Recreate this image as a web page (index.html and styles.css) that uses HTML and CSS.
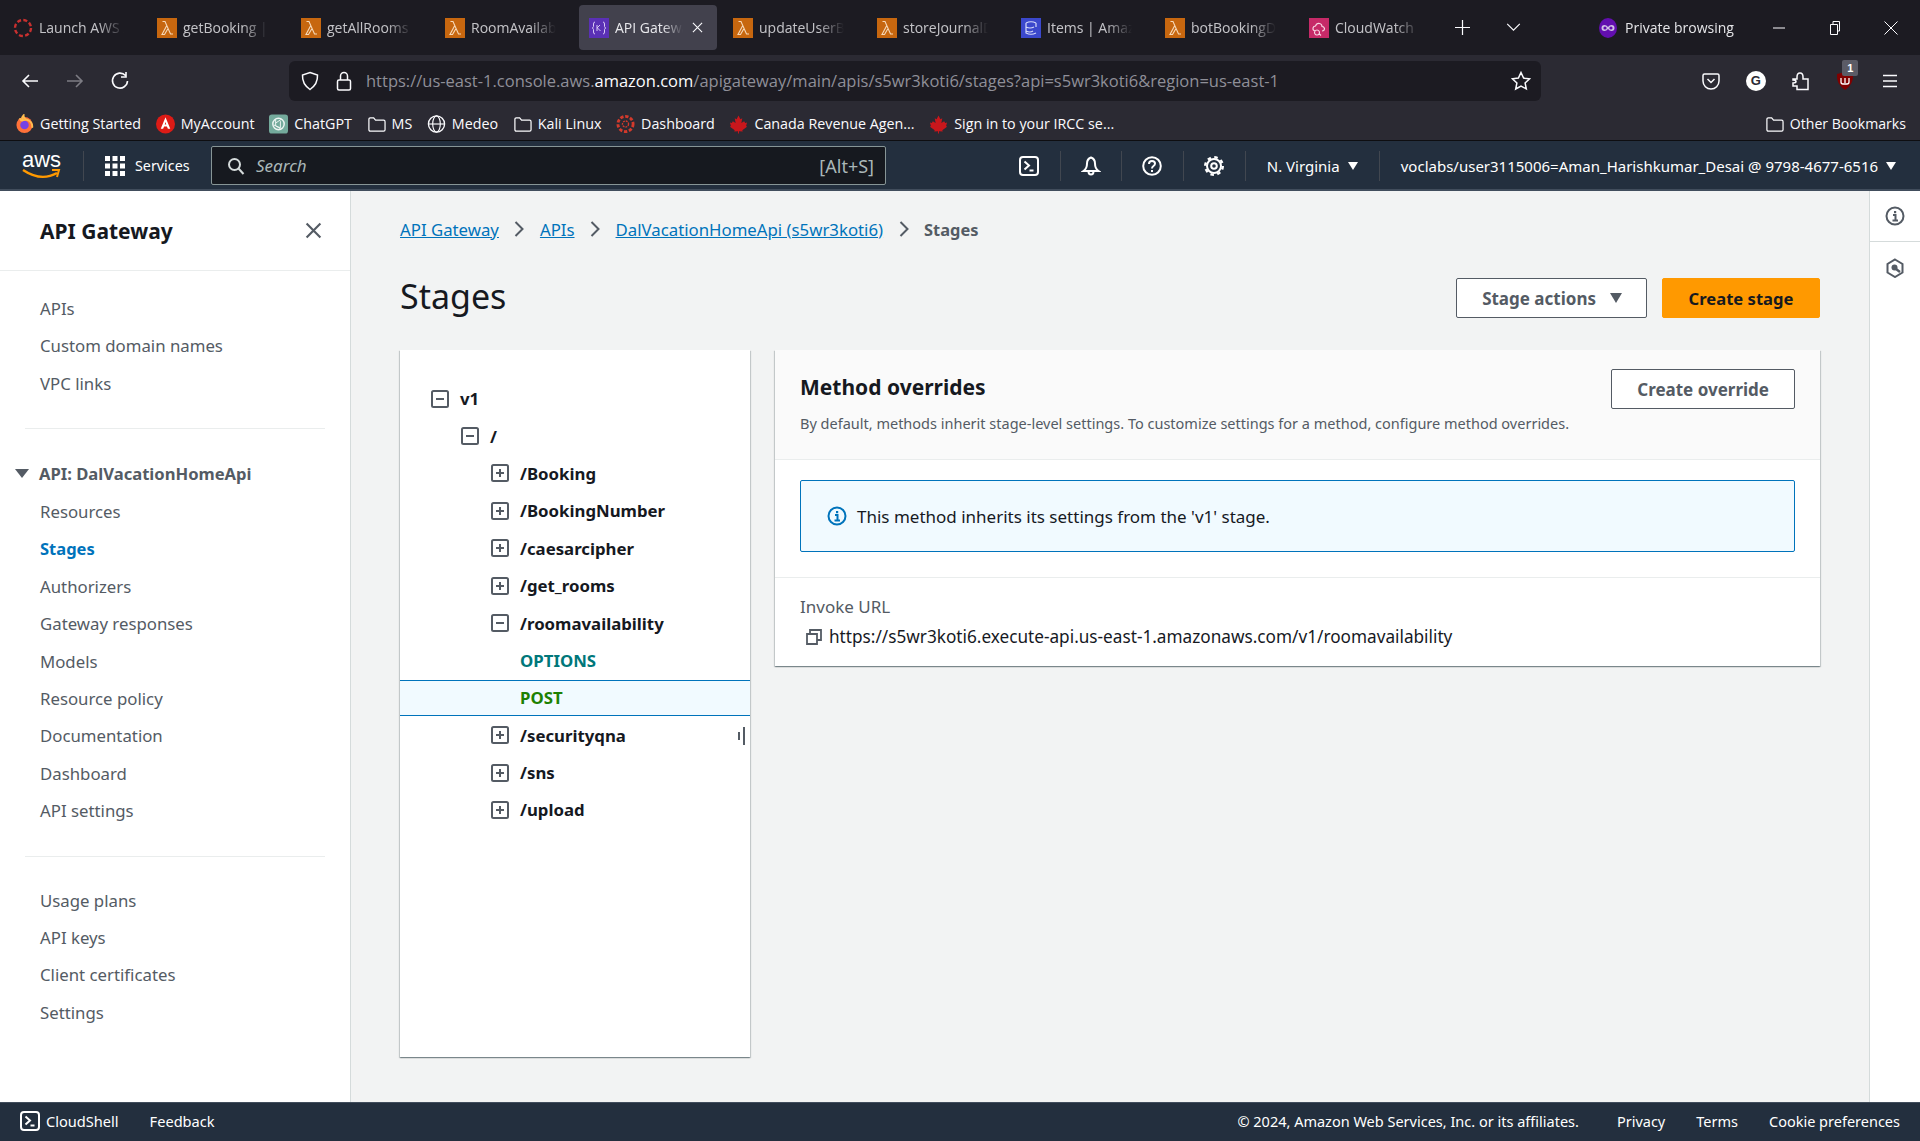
FILE: index.html
```html
<!DOCTYPE html>
<html lang="en">
<head>
<meta charset="utf-8">
<title>Stages - API Gateway</title>
<link rel="stylesheet" href="styles.css">
</head>
<body>
<svg class="defs" width="0" height="0">
  <symbol id="lambda" viewBox="0 0 20 20"><rect width="20" height="20" fill="#c7670f"/><path d="M5.500 3.500H8L13.500 16H16M9.500 8 5 16.500h2.500l3.200-5.500" fill="none" stroke="#f6d9b8" stroke-width="1.100"/></symbol>
  <symbol id="folder" viewBox="0 0 20 20"><path d="M2 16V5q0-1.500 1.500-1.500H7L9 6h8.500Q19 6 19 7.500V16q0 1.500-1.500 1.500h-14Q2 17.500 2 16Z" fill="none" stroke="#fbfbfe" stroke-width="1.300"/></symbol>
  <symbol id="leaf" viewBox="0 0 20 20"><path d="M10 1l2 4 2-1-1 5 3-2 1 2 2-.5-1 3.500 1 1-5 3.500.5 1.500-4-.5V20H9.500v-2.500l-4 .5.500-1.500L1 13l1-1-1-3.500 2 .5 1-2 3 2-1-5 2 1Z" fill="#c8171c"/></symbol>
  <symbol id="plus" viewBox="0 0 18 18"><rect x="1" y="1" width="16" height="16" rx="1.500" fill="none" stroke="#545b64" stroke-width="2"/><path d="M5 9h8M9 5v8" stroke="#545b64" stroke-width="2"/></symbol>
  <symbol id="minus" viewBox="0 0 18 18"><rect x="1" y="1" width="16" height="16" rx="1.500" fill="none" stroke="#545b64" stroke-width="2"/><path d="M5 9h8" stroke="#545b64" stroke-width="2"/></symbol>
  <symbol id="shell" viewBox="0 0 20 20"><rect x="1" y="1" width="18" height="18" rx="3" fill="none" stroke="#fff" stroke-width="2"/><path d="M5.500 5.500 10 9.500l-4.500 4M10.500 14.500h4" fill="none" stroke="#fff" stroke-width="2"/></symbol>
</svg>

<div class="tabbar">
  <div class="tab"><svg class="fav" viewBox="0 0 20 20"><circle cx="10" cy="10" r="8" fill="none" stroke="#c8302f" stroke-width="2.400" stroke-dasharray="4 2.300"/></svg><span class="tab-label">Launch AWS Academy</span></div>
  <div class="tab"><svg class="fav"><use href="#lambda"/></svg><span class="tab-label">getBooking | Lambda</span></div>
  <div class="tab"><svg class="fav"><use href="#lambda"/></svg><span class="tab-label">getAllRooms | Lambda</span></div>
  <div class="tab"><svg class="fav"><use href="#lambda"/></svg><span class="tab-label">RoomAvailability</span></div>
  <div class="tab tab-active"><svg class="fav" viewBox="0 0 20 20"><rect width="20" height="20" fill="#5a30b5"/><path d="M6 4Q4.500 4 4.500 6v2.500L3.500 10l1 1.500V14q0 2 1.500 2M14 4q1.500 0 1.500 2v2.500l1 1.500-1 1.500V14q0 2-1.500 2M8 7v6M8 10l3-3M8.500 10l3 3" fill="none" stroke="#d9c9f5" stroke-width="1"/></svg><span class="tab-label">API Gateway</span><svg class="tab-close" viewBox="0 0 12 12"><path d="M1 1l10 10M11 1 1 11" stroke="#fbfbfe" stroke-width="1.200"/></svg></div>
  <div class="tab"><svg class="fav"><use href="#lambda"/></svg><span class="tab-label">updateUserBooking</span></div>
  <div class="tab"><svg class="fav"><use href="#lambda"/></svg><span class="tab-label">storeJournalData</span></div>
  <div class="tab"><svg class="fav" viewBox="0 0 20 20"><rect width="20" height="20" fill="#3b48cc"/><path d="M5 5q5-2.500 10 0M5 5v10q5 2.500 10 0M5 9q4 2 8 0M5 13q4 2 7 0M15 5v4" fill="none" stroke="#d6dafa" stroke-width="1.200"/></svg><span class="tab-label">Items | Amazon DynamoDB</span></div>
  <div class="tab"><svg class="fav"><use href="#lambda"/></svg><span class="tab-label">botBookingData</span></div>
  <div class="tab"><svg class="fav" viewBox="0 0 20 20"><rect width="20" height="20" fill="#c62a68"/><path d="M6 13q-2.500-.5-2-3 .5-2 2.500-2 1-3 4-2.500 2.500.5 2.500 3 2 0 2.500 2 0 2.500-2.500 2.500M8 12a2.500 2.500 0 1 0 .01 0M10 15.500l2 2" fill="none" stroke="#f8d6e4" stroke-width="1.100"/></svg><span class="tab-label">CloudWatch | Logs</span></div>
  <svg class="tab-plus" viewBox="0 0 16 16"><path d="M8 0v16M0 8h16" stroke="#fbfbfe" stroke-width="1.300"/></svg>
  <svg class="tab-list" viewBox="0 0 16 10"><path d="M1 1l7 7 7-7" fill="none" stroke="#fbfbfe" stroke-width="1.300"/></svg>
  <div class="private">
    <svg viewBox="0 0 18 20" class="private-icon"><ellipse cx="9" cy="10" rx="9" ry="10" fill="#6a0dbf"/><path d="M2.500 10q0-3 3-3 2 0 3.500 2 1.500-2 3.500-2 3 0 3 3t-3 3q-2 0-3.500-2-1.500 2-3.500 2-3 0-3-3Z" fill="#e4d2fb"/><circle cx="6" cy="10" r="1.600" fill="#6a0dbf"/><circle cx="12" cy="10" r="1.600" fill="#6a0dbf"/></svg>
    <span>Private browsing</span>
  </div>
  <div class="winctl">
    <svg viewBox="0 0 14 14"><path d="M1 7h12" stroke="#fbfbfe"/></svg>
    <svg viewBox="0 0 14 14"><path d="M2.500 3.500h7v10h-7zM5 3.500V.5h6.500v9.500H9.500" fill="none" stroke="#fbfbfe"/></svg>
    <svg viewBox="0 0 14 14"><path d="M.5.500l13 13M13.500.5l-13 13" stroke="#fbfbfe"/></svg>
  </div>
</div>

<div class="toolbar">
  <div class="nav-btns">
    <svg viewBox="0 0 20 20"><path d="M18 10H3M9 4l-6 6 6 6" fill="none" stroke="#fbfbfe" stroke-width="1.600"/></svg>
    <svg viewBox="0 0 20 20"><path d="M2 10h15M11 4l6 6-6 6" fill="none" stroke="#7d7c84" stroke-width="1.600"/></svg>
    <svg viewBox="0 0 20 20"><path d="M15.500 4.500A7.500 7.500 0 1 0 17.500 10M16 1v5h-5" fill="none" stroke="#fbfbfe" stroke-width="1.600"/></svg>
  </div>
  <div class="urlbar">
    <svg class="url-icon" viewBox="0 0 20 20"><path d="M10 1.500 17.500 4q.5 9-7.500 14.500Q2 13 2.500 4Z" fill="none" stroke="#fbfbfe" stroke-width="1.500"/></svg>
    <svg class="url-icon" viewBox="0 0 20 20"><rect x="3.500" y="9" width="13" height="10" rx="1.500" fill="none" stroke="#fbfbfe" stroke-width="1.500"/><path d="M6.500 9V5a3.500 3.500 0 0 1 7 0v4" fill="none" stroke="#fbfbfe" stroke-width="1.500"/></svg>
    <span class="url-text">https://us-east-1.console.aws.<b>amazon.com</b>/apigateway/main/apis/s5wr3koti6/stages?api=s5wr3koti6&amp;region=us-east-1</span>
    <svg class="url-star" viewBox="0 0 20 20"><path d="M10 1.500l2.600 5.600 6 .7-4.500 4.100 1.200 6L10 15l-5.300 3 1.200-6L1.400 7.800l6-.7Z" fill="none" stroke="#fbfbfe" stroke-width="1.500"/></svg>
  </div>
  <div class="addons">
    <svg viewBox="0 0 20 20"><path d="M2 4.500Q2 3 3.500 3h13Q18 3 18 4.500V10a8 8 0 0 1-16 0Z" fill="none" stroke="#fbfbfe" stroke-width="1.500"/><path d="M6.500 8l3.500 3.500L13.500 8" fill="none" stroke="#fbfbfe" stroke-width="1.500"/></svg>
    <div class="grammarly">G</div>
    <svg viewBox="0 0 20 20"><path d="M2 8h4V6q0-4 3-4t3 4v2h5v10.500H6v-3.500H2v-3q3 0 3-1.500T2 9Z" fill="none" stroke="#fbfbfe" stroke-width="1.500"/></svg>
    <div class="ublock"><svg viewBox="0 0 20 20"><path d="M10 1 18 3q1 10-8 16Q1 13 2 3Z" fill="#800000"/><path d="M6 7v4q0 2 2 2h4q2 0 2-2V7M10 7v5" fill="none" stroke="#fff" stroke-width="1.300"/></svg><span class="ublock-count">1</span></div>
    <svg viewBox="0 0 20 20"><path d="M3 4.500h14M3 10h14M3 15.500h14" stroke="#fbfbfe" stroke-width="1.600"/></svg>
  </div>
</div>

<div class="bookmarks">
  <a class="bm"><svg class="bm-icon" viewBox="0 0 20 20"><circle cx="10" cy="11" r="8.500" fill="#ff7139"/><circle cx="10" cy="11" r="4.500" fill="#7542e5"/><path d="M5 4q1 3 4 2-3-2 0-5 0 4 5 5 5 3 4 8" fill="none" stroke="#ffbd4f" stroke-width="2"/></svg>Getting Started</a>
  <a class="bm"><svg class="bm-icon" viewBox="0 0 20 20"><circle cx="10" cy="10" r="10" fill="#dd1b16"/><path d="M10 3 5 15h2.500l1-2.500h3l1 2.500H15ZM9.200 10.500 10 8l.8 2.500Z" fill="#fff"/></svg>MyAccount</a>
  <a class="bm"><svg class="bm-icon" viewBox="0 0 20 20"><rect width="20" height="20" rx="3" fill="#74aa9c"/><circle cx="10" cy="10" r="6" fill="none" stroke="#eef5f3" stroke-width="1.500"/><path d="M7 5v7l5 3M13 5 7 9M5 11l7 3V7" fill="none" stroke="#eef5f3"/></svg>ChatGPT</a>
  <a class="bm"><svg class="bm-icon"><use href="#folder"/></svg>MS</a>
  <a class="bm"><svg class="bm-icon" viewBox="0 0 20 20"><circle cx="10" cy="10" r="8.500" fill="none" stroke="#fbfbfe" stroke-width="1.400"/><ellipse cx="10" cy="10" rx="4" ry="8.500" fill="none" stroke="#fbfbfe" stroke-width="1.200"/><path d="M1.500 10h17" stroke="#fbfbfe" stroke-width="1.200"/></svg>Medeo</a>
  <a class="bm"><svg class="bm-icon"><use href="#folder"/></svg>Kali Linux</a>
  <a class="bm"><svg class="bm-icon" viewBox="0 0 20 20"><circle cx="10" cy="10" r="8" fill="none" stroke="#d33a2c" stroke-width="3" stroke-dasharray="3.500 1.800"/><circle cx="10" cy="10" r="3.200" fill="none" stroke="#d33a2c" stroke-width="1.400" stroke-dasharray="2 1"/></svg>Dashboard</a>
  <a class="bm"><svg class="bm-icon"><use href="#leaf"/></svg>Canada Revenue Agen...</a>
  <a class="bm"><svg class="bm-icon"><use href="#leaf"/></svg>Sign in to your IRCC se...</a>
  <a class="bm bm-other"><svg class="bm-icon"><use href="#folder"/></svg>Other Bookmarks</a>
</div>

<header class="awsbar">
  <div class="aws-logo">
    <span class="aws-word">aws</span>
    <svg viewBox="0 0 40 12"><path d="M1 2q18 12 34 3" fill="none" stroke="#ff9900" stroke-width="2.400"/><path d="M30 2h7l-2 7" fill="none" stroke="#ff9900" stroke-width="2"/></svg>
  </div>
  <div class="services">
    <svg viewBox="0 0 20 20" class="grid-icon"><path d="M0 0h5v5H0zM7.500 0h5v5h-5zM15 0h5v5h-5zM0 7.500h5v5H0zM7.500 7.500h5v5h-5zM15 7.500h5v5h-5zM0 15h5v5H0zM7.500 15h5v5h-5zM15 15h5v5h-5z" fill="#fff"/></svg>
    Services
  </div>
  <div class="aws-search">
    <svg viewBox="0 0 18 18"><circle cx="7.500" cy="7.500" r="5.500" fill="none" stroke="#d5dbdb" stroke-width="2"/><path d="M11.500 11.500l5 5.500" stroke="#d5dbdb" stroke-width="2"/></svg>
    <em>Search</em>
    <span>[Alt+S]</span>
  </div>
  <div class="aws-tools">
    <div class="aws-tool"><svg viewBox="0 0 20 20"><use href="#shell"/></svg></div>
    <div class="aws-tool"><svg viewBox="0 0 20 20"><path d="M10 1.500q-4 1.500-4 6 0 5-3.500 7.500h15Q14 12.500 14 7.500q0-4.500-4-6ZM7.500 15.500q0 3 2.500 3t2.500-3" fill="none" stroke="#fff" stroke-width="2"/></svg></div>
    <div class="aws-tool"><svg viewBox="0 0 20 20"><circle cx="10" cy="10" r="8.800" fill="none" stroke="#fff" stroke-width="2"/><path d="M7 8q0-3 3-3t3 2.500q0 1.500-1.500 2.500T10 12.500" fill="none" stroke="#fff" stroke-width="2"/><path d="M9 14h2v2H9z" fill="#fff"/></svg></div>
    <div class="aws-tool"><svg viewBox="0 0 20 20"><circle cx="10" cy="10" r="2.800" fill="none" stroke="#fff" stroke-width="2"/><circle cx="10" cy="10" r="7" fill="none" stroke="#fff" stroke-width="2"/><circle cx="10" cy="10" r="8.800" fill="none" stroke="#fff" stroke-width="2.400" stroke-dasharray="3.500 3.410"/></svg></div>
    <div class="aws-menu region">N. Virginia <i class="caret"></i></div>
    <div class="aws-menu account">voclabs/user3115006=Aman_Harishkumar_Desai @ 9798-4677-6516 <i class="caret"></i></div>
  </div>
</header>

<div class="console">
  <nav class="sidenav">
    <div class="sidenav-head">
      <h2>API Gateway</h2>
      <svg viewBox="0 0 16 16"><path d="M1.500 1.500l13 13M14.500 1.500l-13 13" stroke="#545b64" stroke-width="2"/></svg>
    </div>
    <ul class="navlist">
      <li>APIs</li>
      <li>Custom domain names</li>
      <li>VPC links</li>
    </ul>
    <hr class="navrule">
    <div class="nav-section"><i class="caret caret-grey"></i>API: DalVacationHomeApi</div>
    <ul class="navlist navlist-sub">
      <li>Resources</li>
      <li class="current">Stages</li>
      <li>Authorizers</li>
      <li>Gateway responses</li>
      <li>Models</li>
      <li>Resource policy</li>
      <li>Documentation</li>
      <li>Dashboard</li>
      <li>API settings</li>
    </ul>
    <hr class="navrule">
    <ul class="navlist">
      <li>Usage plans</li>
      <li>API keys</li>
      <li>Client certificates</li>
      <li>Settings</li>
    </ul>
  </nav>

  <main class="content">
    <div class="crumbs">
      <a>API Gateway</a><svg viewBox="0 0 10 16"><path d="M1.500 1l7 7-7 7" fill="none" stroke="#545b64" stroke-width="2"/></svg>
      <a>APIs</a><svg viewBox="0 0 10 16"><path d="M1.500 1l7 7-7 7" fill="none" stroke="#545b64" stroke-width="2"/></svg>
      <a>DalVacationHomeApi (s5wr3koti6)</a><svg viewBox="0 0 10 16"><path d="M1.500 1l7 7-7 7" fill="none" stroke="#545b64" stroke-width="2"/></svg>
      <span>Stages</span>
    </div>
    <div class="page-head">
      <h1>Stages</h1>
      <div class="page-actions">
        <button class="btn btn-actions">Stage actions <i class="caret caret-dark"></i></button>
        <button class="btn btn-primary">Create stage</button>
      </div>
    </div>
    <div class="columns">
      <section class="tree">
        <div class="node d0"><svg><use href="#minus"/></svg>v1</div>
        <div class="node d1"><svg><use href="#minus"/></svg>/</div>
        <div class="node d2"><svg><use href="#plus"/></svg>/Booking</div>
        <div class="node d2"><svg><use href="#plus"/></svg>/BookingNumber</div>
        <div class="node d2"><svg><use href="#plus"/></svg>/caesarcipher</div>
        <div class="node d2"><svg><use href="#plus"/></svg>/get_rooms</div>
        <div class="node d2"><svg><use href="#minus"/></svg>/roomavailability</div>
        <div class="node method method-options">OPTIONS</div>
        <div class="node method method-post">POST</div>
        <div class="node d2"><svg><use href="#plus"/></svg>/securityqna<i class="drag-cursor"></i></div>
        <div class="node d2"><svg><use href="#plus"/></svg>/sns</div>
        <div class="node d2"><svg><use href="#plus"/></svg>/upload</div>
      </section>
      <section class="detail">
        <div class="detail-head">
          <div>
            <h3>Method overrides</h3>
            <p>By default, methods inherit stage-level settings. To customize settings for a method, configure method overrides.</p>
          </div>
          <button class="btn btn-override">Create override</button>
        </div>
        <div class="detail-alert">
          <div class="alert">
            <svg viewBox="0 0 20 20"><circle cx="10" cy="10" r="8.500" fill="none" stroke="#0073bb" stroke-width="2"/><path d="M8 9h2.500v5M7.500 14.500h5.500" fill="none" stroke="#0073bb" stroke-width="2"/><path d="M9 5h2.200v2.200H9z" fill="#0073bb"/></svg>
            This method inherits its settings from the 'v1' stage.
          </div>
        </div>
        <div class="invoke">
          <div class="invoke-label">Invoke URL</div>
          <div class="invoke-url">
            <svg viewBox="0 0 16 16"><path d="M1 5h10v10H1zM4 5V1h11v10h-4" fill="none" stroke="#545b64" stroke-width="1.800"/></svg>
            https://s5wr3koti6.execute-api.us-east-1.amazonaws.com/v1/roomavailability
          </div>
        </div>
      </section>
    </div>
  </main>

  <aside class="rail">
    <div class="rail-cell"><svg viewBox="0 0 20 20"><circle cx="10" cy="10" r="8.500" fill="none" stroke="#545b64" stroke-width="2"/><path d="M8 9h2.500v5M7.500 14.500h5.500" fill="none" stroke="#545b64" stroke-width="2"/><path d="M9 5h2.200v2.200H9z" fill="#545b64"/></svg></div>
    <div class="rail-cell"><svg viewBox="0 0 20 20"><path d="M10 1.500 17.500 6v8.500L10 19l-7.500-4.500V6Z" fill="none" stroke="#545b64" stroke-width="2"/><circle cx="9.500" cy="9.500" r="3" fill="#545b64"/><path d="M11 11l4 3" stroke="#545b64" stroke-width="2.400"/></svg></div>
  </aside>
</div>

<footer class="awsfoot">
  <div class="foot-left">
    <span class="foot-shell"><svg viewBox="0 0 20 20"><use href="#shell"/></svg>CloudShell</span>
    <span>Feedback</span>
  </div>
  <div class="foot-right">
    <span class="foot-copy">© 2024, Amazon Web Services, Inc. or its affiliates.</span>
    <span>Privacy</span>
    <span>Terms</span>
    <span>Cookie preferences</span>
  </div>
</footer>
</body>
</html>
```

FILE: styles.css
```css
* { box-sizing: border-box; }
html, body { margin: 0; padding: 0; }
body {
    width: 1920px;
    height: 1141px;
    overflow: hidden;
    display: flex;
    flex-direction: column;
    font: 16.800px "Noto Sans", "Open Sans", sans-serif;
    color: #16191f;
    background: #f2f3f3;
}
.defs { position: absolute; }
ul { list-style: none; margin: 0; padding: 0; }
svg { display: block; flex: none; }

/* browser chrome */
.tabbar {
    height: 55px;
    flex: none;
    display: flex;
    align-items: center;
    padding-left: 5px;
    background: #1c1b22;
    color: #fbfbfe;
    font: 14px "Open Sans", sans-serif;
}
.tab {
    width: 144px;
    height: 45px;
    flex: none;
    display: flex;
    align-items: center;
    padding: 0 0 0 8px;
    border-radius: 4px;
}
.tab-active { width: 138px; margin: 0 8px 0 -2px; padding-left: 10px; background: #42414d; }
.fav { width: 20px; height: 20px; margin-right: 6px; }
.tab-label {
    width: 85px;
    white-space: nowrap;
    overflow: hidden;
    opacity: .75;
    -webkit-mask-image: linear-gradient(to right, #000 70%, transparent);
    mask-image: linear-gradient(to right, #000 70%, transparent);
}
.tab-active .tab-label { width: 68px; opacity: .9; }
.tab-close { width: 11px; height: 11px; margin-left: 9px; }
.tab-plus { width: 15px; height: 15px; margin-left: 10px; }
.tab-list { width: 15px; height: 9px; margin-left: 36px; }
.private { display: flex; align-items: center; gap: 8px; margin-left: 78px; opacity: .9; }
.private-icon { width: 18px; height: 20px; }
.winctl { display: flex; gap: 42px; margin-left: 38px; }
.winctl svg { width: 14px; height: 14px; }

.toolbar {
    height: 51px;
    flex: none;
    display: flex;
    align-items: center;
    background: #2b2a33;
}
.nav-btns { width: 289px; display: flex; gap: 25px; padding-left: 20px; }
.nav-btns svg { width: 20px; height: 20px; }
.urlbar {
    width: 1252px;
    height: 40px;
    display: flex;
    align-items: center;
    padding: 0 10px 0 11px;
    border-radius: 6px;
    background: #1c1b22;
    font: 16.500px "Open Sans", sans-serif;
}
.url-icon { width: 20px; height: 20px; margin-right: 14px; }
.url-icon + .url-icon { margin-right: 12px; }
.url-text { flex: 1; color: #8f8f98; white-space: nowrap; }
.url-text b { font-weight: 400; color: #fbfbfe; }
.url-star { width: 20px; height: 20px; }
.addons { flex: 1; display: flex; align-items: center; justify-content: space-between; padding: 0 20px 0 160px; }
.addons svg { width: 20px; height: 20px; }
.grammarly {
    width: 20px; height: 20px;
    border-radius: 50%;
    background: #fff;
    color: #2b2a33;
    font: bold 13px/20px "Liberation Sans", sans-serif;
    text-align: center;
}
.ublock { position: relative; }
.ublock-count {
    position: absolute;
    top: -11px; left: 7px;
    width: 16px; height: 16px;
    border-radius: 2px;
    background: #5b5b66;
    color: #fff;
    font: bold 11px/16px "Liberation Sans", sans-serif;
    text-align: center;
}

.bookmarks {
    height: 35px;
    flex: none;
    display: flex;
    align-items: center;
    gap: 14.600px;
    padding: 1px 14px 0 15px;
    background: #2b2a33;
    border-bottom: 1px solid #0e0e11;
    color: #fbfbfe;
    font: 14.300px "Open Sans", sans-serif;
}
.bm { display: flex; align-items: center; gap: 6px; white-space: nowrap; }
.bm-icon { width: 19px; height: 20px; }
.bm-other { margin-left: auto; font-size: 14.100px; }

/* aws header */
.awsbar {
    height: 50px;
    flex: none;
    display: flex;
    align-items: center;
    padding-top: 1px;
    background: #232f3e;
    border-bottom: 2px solid #414d5c;
    color: #fff;
    font-size: 15px;
}
.aws-logo { width: 84px; height: 30px; padding: 0 21px 0 22px; border-right: 1px solid #414750; }
.aws-word { display: block; font: 400 22px/17px "Liberation Sans", sans-serif; }
.aws-logo svg { width: 40px; height: 12px; }
.services { width: 127px; display: flex; align-items: center; gap: 10px; padding-left: 21px; font-size: 14.300px; }
.grid-icon { width: 20px; height: 20px; }
.aws-search {
    width: 675px;
    height: 39px;
    display: flex;
    align-items: center;
    padding: 0 11px 0 15px;
    background: #16191f;
    border: 1px solid #879596;
    border-radius: 2px;
    color: #d5dbdb;
    font-size: 17px;
}
.aws-search svg { width: 18px; height: 18px; margin-right: 11px; }
.aws-search em { flex: 1; color: #aab7b8; }
.aws-search span { font-size: 18px; color: #aab7b8; }
.aws-tools { display: flex; align-items: center; height: 30px; margin-left: 113px; }
.aws-tool {
    width: 62.700px;
    height: 30px;
    display: flex;
    align-items: center;
    justify-content: center;
    border-right: 1px solid #414750;
    margin-left: -1px;
}
.aws-tool svg { width: 20px; height: 22px; }
.aws-menu { display: flex; align-items: center; gap: 8px; white-space: nowrap; }
.region { width: 134px; height: 30px; padding-left: 21px; border-right: 1px solid #414750; }
.account { padding-left: 21px; }
.caret {
    width: 0; height: 0;
    display: inline-block;
    border: 5.500px solid transparent;
    border-top: 8px solid #fff;
    border-bottom: 0;
}
.caret-grey { border-top-color: #545b64; border-width: 9px 7px 0; margin-right: 10px; }
.caret-dark { border-top-color: #545b64; border-width: 10px 6.500px 0; margin-left: 14px; }

/* layout under header */
.console { flex: 1; min-height: 0; display: flex; }
.sidenav { width: 351px; flex: none; background: #fff; border-right: 1px solid #d5dbdb; }
.sidenav-head {
    height: 80px;
    display: flex;
    align-items: center;
    justify-content: space-between;
    padding: 0 28px 0 40px;
    border-bottom: 1px solid #eaeded;
}
.sidenav-head h2 { margin: 0; font-size: 21px; font-weight: 700; }
.sidenav-head svg { width: 17px; height: 17px; }
.navlist { padding: 19px 0 0 40px; color: #545b64; }
.navlist li { height: 37.400px; line-height: 37px; }
.navlist .current { color: #0073bb; font-weight: 700; font-size: 16.500px; }
.navlist-sub { padding-top: .5px; }
.navrule { height: 1px; margin: 26px 25px 0; border: 0; background: #eaeded; }
.navrule + .navlist { padding-top: 25px; }
.nav-section {
    height: 37.400px;
    margin-top: 26px;
    padding-left: 15px;
    display: flex;
    align-items: center;
    color: #545b64;
    font-size: 16.600px;
    font-weight: 700;
}

.content { flex: 1; min-width: 0; padding: 19px 49px 0; }
.crumbs { height: 38px; display: flex; align-items: center; gap: 15.500px; color: #545b64; }
.crumbs a { color: #0073bb; text-decoration: underline; }
.crumbs svg { width: 10px; height: 16px; }
.crumbs span { font-weight: 700; font-size: 16.400px; }
.page-head { height: 101px; display: flex; align-items: flex-start; justify-content: space-between; padding-top: 23px; margin-top: 1px; }
.page-head h1 { margin: 0; font-size: 34px; line-height: 48px; font-weight: 400; }
.page-actions { display: flex; gap: 15px; margin-top: 6px; }
.btn {
    height: 40px;
    padding: 0 25px;
    display: flex;
    align-items: center;
    background: #fff;
    border: 1px solid #545b64;
    border-radius: 2px;
    color: #545b64;
    font: 700 17px "Noto Sans", sans-serif;
}
.btn-actions { padding-right: 24px; }
.btn-primary { width: 158px; justify-content: center; padding: 0; background: #ff9900; border-color: #ff9900; color: #16191f; font-size: 16.600px; }
.columns { display: flex; gap: 25px; align-items: flex-start; }

.tree {
    width: 350px;
    height: 707px;
    flex: none;
    padding-top: 30px;
    background: #fff;
    box-shadow: 0 1px 1px 0 rgba(0,28,36,.3), 1px 1px 1px 0 rgba(0,28,36,.15), -1px 1px 1px 0 rgba(0,28,36,.15);
}
.node {
    position: relative;
    height: 37.400px;
    display: flex;
    align-items: center;
    gap: 11px;
    font-weight: 700;
}
.node svg { width: 18px; height: 18px; }
.d0 { padding-left: 31px; }
.d1 { padding-left: 61px; }
.d2 { padding-left: 91px; }
.method { padding-left: 120px; }
.method-options { color: #00777a; }
.method-post {
    height: 35.400px;
    margin: 1px 0;
    background: #f1faff;
    border: solid #0073bb;
    border-width: 1px 0;
    color: #1d8102;
}
.drag-cursor {
    position: absolute;
    right: 5px; top: 10px;
    width: 7px; height: 18px;
    border-right: 2px solid #545b64;
}
.drag-cursor::before {
    content: "";
    position: absolute;
    left: 0; top: 5px;
    width: 2px; height: 8px;
    background: #545b64;
}

.detail {
    flex: 1;
    background: #fff;
    box-shadow: 0 1px 1px 0 rgba(0,28,36,.3), 1px 1px 1px 0 rgba(0,28,36,.15), -1px 1px 1px 0 rgba(0,28,36,.15);
}
.detail-head {
    height: 110px;
    display: flex;
    justify-content: space-between;
    padding: 19px 25px 0;
    background: #fafafa;
    border-bottom: 1px solid #eaeded;
}
.detail-head h3 { margin: 0; font-size: 21px; font-weight: 700; line-height: 36px; }
.detail-head p { margin: 8px 0 0; color: #545b64; font-size: 14.500px; }
.detail-alert { padding: 20px 25px 25px; border-bottom: 1px solid #eaeded; }
.alert {
    height: 72px;
    display: flex;
    align-items: center;
    gap: 10px;
    padding-left: 26px;
    background: #f1faff;
    border: 1px solid #0073bb;
    border-radius: 2px;
    font-size: 17px;
}
.alert svg { width: 20px; height: 20px; }
.invoke { padding: 14px 25px 0; height: 88px; font-size: 17px; }
.invoke-label { line-height: 30px; color: #545b64; }
.invoke-url { display: flex; align-items: center; gap: 7px; padding-left: 6px; line-height: 30px; font-size: 17.200px; }
.invoke-url svg { width: 16px; height: 16px; }

.rail { width: 51px; flex: none; background: #fff; border-left: 1px solid #d5dbdb; }
.rail-cell { height: 51px; display: flex; justify-content: center; align-items: center; border-bottom: 1px solid #d5dbdb; }
.rail-cell + .rail-cell { border: 0; }
.rail svg { width: 20px; height: 20px; }

.awsfoot {
    height: 39px;
    flex: none;
    display: flex;
    align-items: center;
    justify-content: space-between;
    padding: 0 20px 2px;
    background: #232f3e;
    border-top: 1px solid #414d5c;
    color: #fff;
    font-size: 14.600px;
}
.foot-left, .foot-right { display: flex; align-items: center; gap: 31px; }
.foot-right { font-size: 14.500px; }
.foot-copy { margin-right: 7px; }
.foot-shell { display: flex; align-items: center; gap: 6px; }
.foot-shell svg { width: 20px; height: 20px; }
```
